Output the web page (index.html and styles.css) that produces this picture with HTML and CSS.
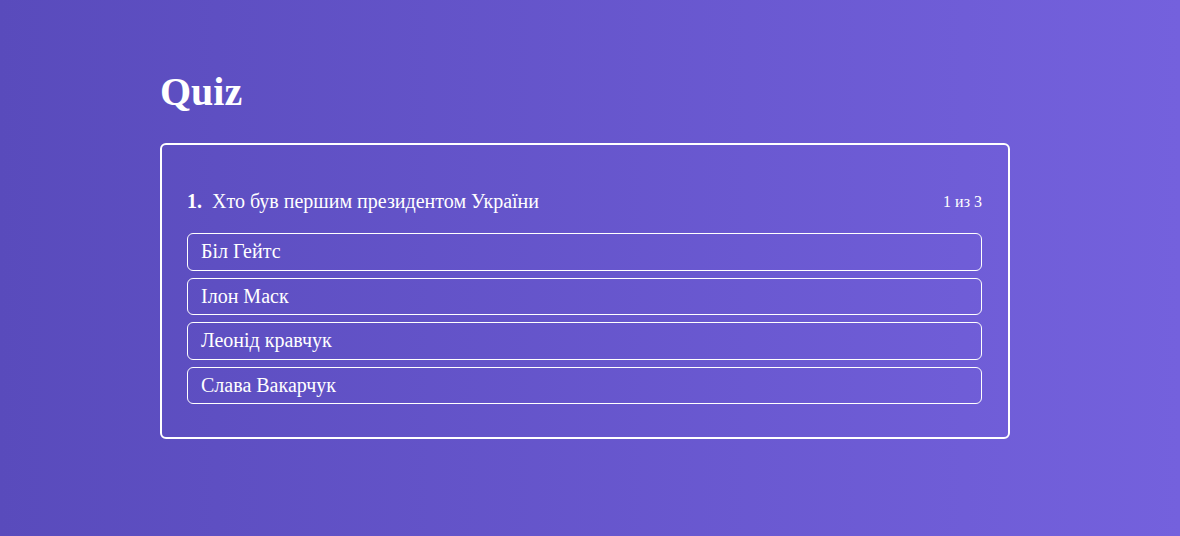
FILE: index.html
```html
<!DOCTYPE html>
<html>
<head>
<meta charset="utf-8">
<link rel="stylesheet" href="styles.css">
</head>
<body>
<div class="wrap">
  <h1 class="title">Quiz</h1>
  <div class="card">
    <div class="head">
      <div class="question"><b>1.</b>&nbsp; Хто був першим президентом України</div>
      <div class="count">1 из 3</div>
    </div>
    <ul class="options">
      <li class="option">Біл Гейтс</li>
      <li class="option">Ілон Маск</li>
      <li class="option">Леонід кравчук</li>
      <li class="option">Слава Вакарчук</li>
    </ul>
  </div>
</div>
</body>
</html>
```
FILE: styles.css
```css
html, body {
  margin: 0;
  height: 100%;
}
body {
  background: linear-gradient(90deg, #594bbc 0%, #7461dd 100%);
  font-family: "Liberation Serif", "Times New Roman", serif;
  color: #fff;
}
.wrap {
  width: 850px;
  margin-left: 160px;
  padding-top: 45px;
}
.title {
  font-size: 40px;
  font-weight: bold;
  margin: 24px 0 28px;
  line-height: 46px;
}
.card {
  border: 2px solid #fff;
  border-radius: 6px;
  padding: 45px 26px 33px 25px;
}
.head {
  display: flex;
  justify-content: space-between;
  align-items: center;
  height: 23px;
  margin-bottom: 20px;
}
.question {
  font-size: 20px;
}
.count {
  font-size: 16px;
}
.options {
  list-style: none;
  margin: 0;
  padding: 0;
  display: flex;
  flex-direction: column;
  gap: 7px;
}
.option {
  border: 1px solid #fff;
  border-radius: 6px;
  padding: 0 13px;
  height: 35.5px;
  line-height: 35.5px;
  font-size: 20px;
}
```
